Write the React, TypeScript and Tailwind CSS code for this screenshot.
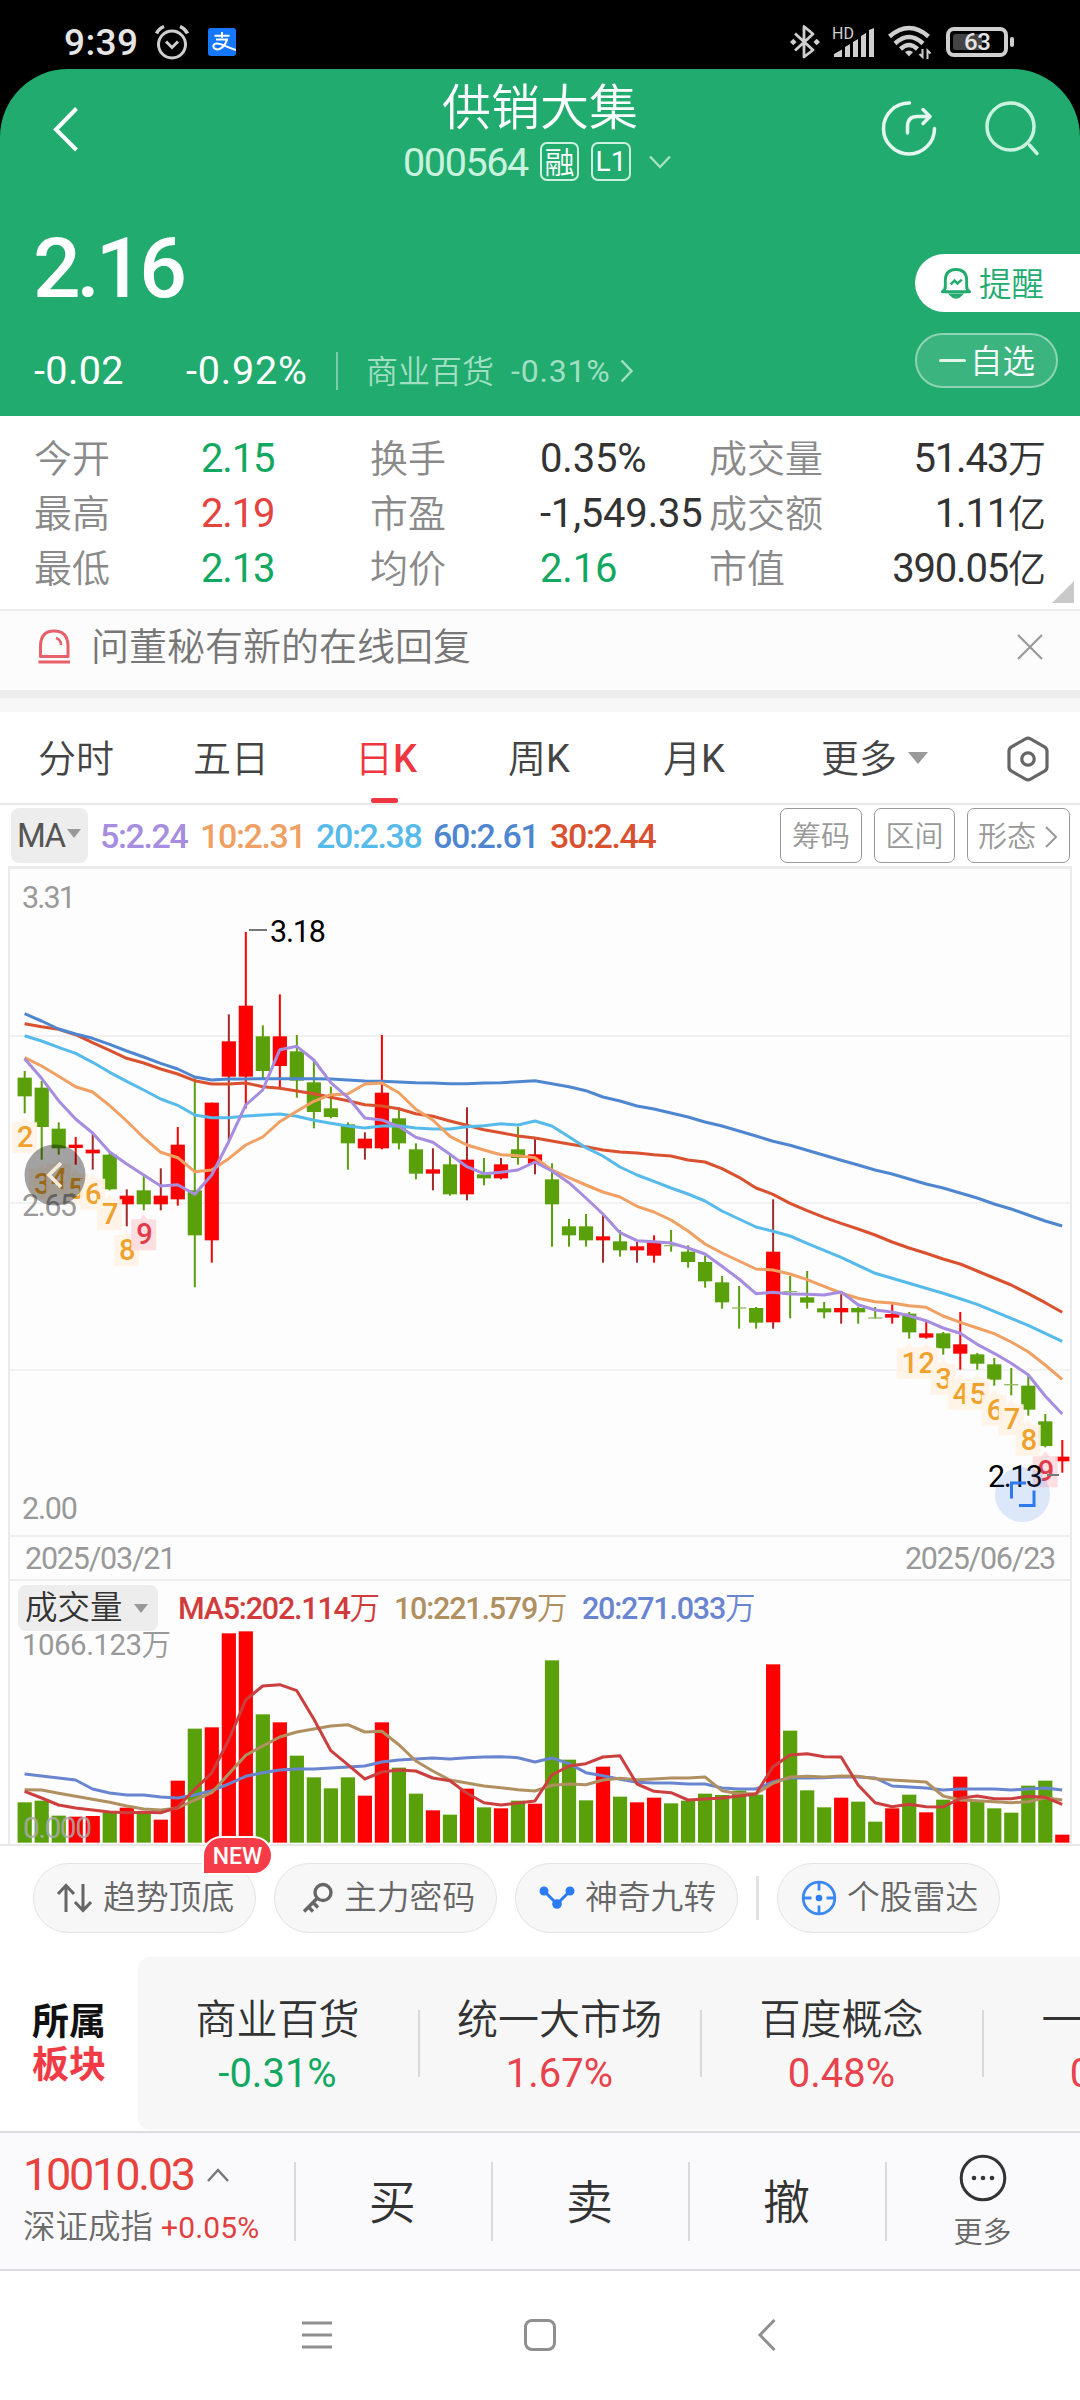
import React from "react";

const RED = "#ff0000";
const GREEN = "#5aa00a";
const DARK_WICK = "#a12a2a";

const STEP = 17.01;
const FIRST_X = 24.6;
const cx = (i: number) => FIRST_X + i * STEP;
// Chart values are stored in thirds of a pixel below each plot's origin.
const priceY = (v: number) => 860 + v / 3;
const volY = (v: number) => 1570 + v / 3;

// kind, high, low, body top, body bottom ("d" = rising candle with a dark wick)
type Candle = ["g" | "r" | "d", number, number, number, number];
const candles: Candle[] = [
  ["g", 633, 760, 653, 709], ["g", 663, 899, 683, 801], ["g", 787, 884, 806, 865],
  ["r", 831, 914, 854, 864], ["d", 820, 929, 869, 880], ["g", 878, 991, 884, 988],
  ["d", 988, 1099, 1007, 1033], ["g", 945, 1051, 991, 1033], ["d", 925, 1051, 1007, 1033],
  ["r", 801, 1037, 854, 1018], ["g", 655, 1282, 991, 1126], ["r", 728, 1208, 728, 1141],
  ["d", 463, 840, 544, 650], ["r", 216, 745, 437, 650], ["g", 496, 655, 529, 633],
  ["r", 403, 685, 529, 618], ["g", 525, 713, 574, 662], ["g", 600, 805, 667, 756],
  ["g", 680, 775, 745, 771], ["g", 787, 929, 793, 850], ["d", 817, 899, 836, 865],
  ["r", 525, 868, 698, 865], ["g", 742, 868, 775, 850], ["g", 850, 958, 868, 941],
  ["d", 865, 991, 928, 941], ["g", 884, 1007, 913, 1003], ["d", 742, 1021, 899, 1003],
  ["g", 894, 976, 943, 955], ["d", 894, 958, 913, 955], ["g", 800, 914, 868, 894],
  ["d", 835, 943, 883, 911], ["g", 910, 1160, 958, 1033], ["g", 1077, 1160, 1099, 1126],
  ["g", 1062, 1160, 1099, 1141], ["d", 1065, 1208, 1129, 1141], ["g", 1110, 1190, 1144, 1171],
  ["d", 1145, 1208, 1159, 1171], ["r", 1126, 1208, 1148, 1187], ["g", 1110, 1175, 1155, 1159],
  ["g", 1156, 1223, 1175, 1206], ["g", 1187, 1283, 1206, 1264], ["g", 1248, 1346, 1267, 1327],
  ["g", 1278, 1406, 1342, 1346], ["g", 1341, 1406, 1344, 1388], ["d", 1018, 1406, 1175, 1387],
  ["g", 1248, 1375, 1293, 1297], ["g", 1233, 1346, 1312, 1328], ["g", 1326, 1375, 1345, 1357],
  ["d", 1297, 1391, 1344, 1357], ["g", 1340, 1391, 1344, 1357], ["g", 1341, 1375, 1372, 1376],
  ["r", 1333, 1391, 1362, 1373], ["g", 1356, 1436, 1361, 1417], ["r", 1385, 1436, 1420, 1433],
  ["g", 1416, 1484, 1420, 1465], ["r", 1356, 1529, 1453, 1481], ["g", 1479, 1529, 1483, 1511],
  ["g", 1494, 1577, 1513, 1559], ["g", 1524, 1606, 1572, 1576], ["g", 1548, 1667, 1577, 1649],
  ["g", 1662, 1762, 1684, 1758], ["r", 1740, 1838, 1790, 1804],
];

const priceLines: [string, number[]][] = [
  ["#d9512f", [491, 500, 508, 524, 548, 571, 595, 609, 627, 642, 662, 672, 672, 669, 680, 685, 693, 701, 712, 722, 734, 738, 746, 761, 769, 783, 796, 809, 818, 828, 834, 843, 852, 860, 870, 876, 879, 884, 888, 900, 906, 926, 952, 984, 1003, 1030, 1052, 1072, 1090, 1107, 1125, 1146, 1164, 1180, 1197, 1212, 1233, 1254, 1275, 1301, 1328, 1357]],
  ["#4f86d0", [461, 483, 507, 522, 535, 553, 573, 591, 610, 627, 651, 660, 657, 657, 656, 656, 656, 656, 657, 660, 663, 664, 666, 668, 669, 671, 671, 669, 668, 665, 662, 671, 680, 692, 711, 723, 738, 747, 759, 771, 786, 798, 813, 828, 844, 856, 871, 886, 901, 915, 930, 942, 957, 972, 984, 999, 1014, 1032, 1047, 1065, 1083, 1098]],
  ["#56bbea", [527, 543, 562, 580, 607, 637, 664, 690, 717, 736, 765, 773, 773, 768, 765, 762, 769, 781, 790, 798, 804, 798, 797, 804, 807, 807, 800, 797, 791, 795, 783, 798, 830, 863, 888, 921, 945, 964, 984, 1002, 1023, 1053, 1077, 1101, 1114, 1128, 1150, 1171, 1192, 1216, 1240, 1255, 1270, 1285, 1300, 1316, 1333, 1354, 1375, 1396, 1420, 1444]],
  ["#f0a062", [593, 618, 649, 680, 696, 737, 783, 833, 877, 893, 935, 930, 896, 855, 831, 785, 754, 724, 704, 702, 672, 669, 698, 748, 780, 829, 855, 870, 884, 887, 893, 930, 953, 975, 996, 1011, 1039, 1056, 1080, 1113, 1152, 1179, 1203, 1227, 1230, 1242, 1259, 1279, 1299, 1315, 1325, 1329, 1337, 1342, 1368, 1387, 1404, 1421, 1446, 1475, 1515, 1558]],
  ["#a78de0", [596, 655, 722, 777, 819, 876, 912, 945, 978, 974, 1003, 945, 845, 735, 690, 569, 559, 600, 668, 712, 774, 780, 799, 832, 847, 883, 920, 941, 937, 930, 906, 933, 968, 1014, 1062, 1118, 1142, 1145, 1149, 1164, 1182, 1219, 1257, 1301, 1297, 1302, 1303, 1305, 1296, 1334, 1350, 1356, 1367, 1382, 1404, 1420, 1453, 1480, 1510, 1544, 1608, 1662]],
];

const volumes = [697, 692, 737, 740, 738, 727, 713, 727, 749, 632, 476, 472, 190, 184, 433, 457, 557, 622, 655, 622, 677, 457, 593, 671, 721, 734, 656, 712, 715, 692, 701, 271, 569, 691, 590, 680, 697, 683, 700, 692, 671, 675, 662, 674, 283, 482, 661, 712, 683, 695, 755, 715, 674, 727, 689, 620, 695, 715, 728, 647, 632, 794];

const volumeLines: [string, number[]][] = [
  ["#6a85d0", [612, 618, 624, 630, 657, 669, 675, 675, 681, 684, 675, 662, 642, 619, 608, 600, 597, 597, 594, 591, 588, 576, 570, 567, 564, 567, 563, 561, 560, 563, 576, 564, 581, 608, 617, 628, 637, 639, 639, 642, 642, 654, 657, 657, 636, 623, 624, 623, 620, 621, 624, 648, 651, 654, 660, 657, 657, 657, 660, 657, 654, 660]],
  ["#b09060", [659, 660, 670, 679, 688, 697, 708, 717, 720, 714, 690, 668, 612, 556, 528, 501, 486, 477, 468, 464, 486, 484, 524, 573, 603, 630, 639, 648, 653, 659, 663, 646, 642, 644, 630, 625, 629, 627, 624, 624, 621, 662, 671, 671, 640, 621, 619, 621, 618, 619, 626, 630, 633, 636, 678, 690, 692, 695, 698, 695, 683, 690]],
  ["#cc3f3f", [664, 684, 705, 714, 720, 726, 728, 727, 728, 712, 658, 609, 510, 390, 348, 344, 362, 447, 542, 584, 627, 606, 600, 603, 624, 632, 670, 698, 705, 699, 693, 615, 588, 581, 561, 557, 642, 664, 668, 690, 687, 684, 678, 672, 590, 555, 551, 560, 561, 645, 698, 710, 703, 710, 711, 685, 678, 686, 686, 679, 682, 703]],
];

// Candle index and count shown by each nine-turn marker
const markers: [number, number][] = [
  [0, 2], [1, 3], [2, 4], [3, 5], [4, 6], [5, 7], [6, 8], [7, 9],
  [52, 1], [53, 2], [54, 3], [55, 4], [56, 5], [57, 6], [58, 7], [59, 8], [60, 9],
];

const points = (vals: number[], y: (v: number) => number) =>
  vals.map((v, i) => `${cx(i).toFixed(1)},${y(v).toFixed(1)}`).join(" ");

function PriceChart() {
  return (
    <svg viewBox="10 869 1060 666" className="block h-[666px] w-[1060px] font-[Roboto] font-normal">
      {[1036, 1203, 1370].map((y) => (
        <line key={y} x1="10" x2="1070" y1={y} y2={y} stroke="#f2f2f2" strokeWidth="2" />
      ))}
      {candles.map(([k, hi, lo, top, bot], i) => {
        const body = k === "g" ? GREEN : RED;
        const wick = k === "d" ? DARK_WICK : body;
        const thin = k === "g" && bot - top <= 4;
        return (
          <g key={i}>
            <rect x={cx(i) - 0.9} y={priceY(hi)} width="2" height={(lo - hi) / 3} fill={wick} />
            <rect x={cx(i) - 7} y={priceY(top)} width="14.2" height={(bot - top) / 3} fill={thin ? "#92bb66" : body} />
          </g>
        );
      })}
      {priceLines.map(([c, v]) => (
        <polyline key={c} points={points(v, priceY)} fill="none" stroke={c} strokeWidth="3" strokeLinejoin="round" />
      ))}
      <line x1="249" x2="267" y1="930" y2="930" stroke="#777" strokeWidth="2" />
      <text x="270" y="942" fontSize="30.5" textLength="56" fill="#000">3.18</text>
      {markers.map(([i, n]) => {
        const x = cx(i);
        const y = priceY(candles[i][2]);
        const last = n === 9;
        return (
          <g key={i}>
            <path
              d={`M${x - 12.5} ${y + 9} h8.5 l4 -5 l4 5 h8.5 v31 h-25z`}
              fill={last ? "#fddcdf" : "#fff3e5"}
              fillOpacity="0.93"
            />
            <text x={x + 0.7} y={y + 34} fontSize="29" textAnchor="middle" fill={last ? "#e23c4a" : "#f0a12c"} className="font-medium">
              {n}
            </text>
          </g>
        );
      })}
      <g fill="#999" fontSize="30.5">
        <text x="22" y="907.5" textLength="54">3.31</text>
        <text x="22" y="1216" textLength="55">2.65</text>
        <text x="22" y="1519" textLength="56">2.00</text>
      </g>
      <line x1="1047" x2="1059" y1="1475" y2="1475" stroke="#777" strokeWidth="2" />
      <text x="988" y="1487" fontSize="30.5" textLength="55" fill="#000">2.13</text>
      <circle cx="55" cy="1175" r="30.5" fill="#000" fillOpacity="0.36" />
      <path d="M61 1163 L49 1175 L61 1187" fill="none" stroke="#f3ead9" strokeWidth="3.8" />
      <circle cx="1022.5" cy="1494.5" r="27.5" fill="#2f74ee" fillOpacity="0.16" />
      <path d="M1026 1483 H1011.5 V1498.5 M1034 1490.5 V1505.5 H1019" fill="none" stroke="#2f78ee" strokeWidth="3" />
    </svg>
  );
}

function VolumeChart() {
  return (
    <svg viewBox="10 1630 1060 214" className="block h-[214px] w-[1060px] font-[Roboto,'Noto_Sans_CJK_SC',sans-serif] font-normal">
      {volumes.map((v, i) => (
        <rect key={i} x={cx(i) - 7} y={volY(v)} width="14.2" height={(818 - v) / 3} fill={candles[i][0] === "g" ? GREEN : RED} />
      ))}
      {volumeLines.map(([c, v]) => (
        <polyline key={c} points={points(v, volY)} fill="none" stroke={c} strokeWidth="3" strokeLinejoin="round" />
      ))}
      <text x="22" y="1655" fontSize="29.5" textLength="149" fill="#999">
        1066.123<tspan className="font-[350]">万</tspan>
      </text>
      <text x="23" y="1838" fontSize="30" textLength="69" fill="#aaa" fillOpacity="0.85">0.000</text>
    </svg>
  );
}

function StatusBar() {
  return (
    <div className="flex h-[69px] items-center bg-black pt-[15px] pl-[64px]">
      <div className="w-[91px] text-[37px] leading-none font-medium tracking-[0.01em] text-[#e5e5e5]">9:39</div>
      <svg viewBox="0 0 34 36" className="-mt-[1px] h-[36px] w-[34px]" fill="none" stroke="#cfcfcf" strokeWidth="3">
        <circle cx="17" cy="20.5" r="13.5" />
        <path d="M11 17.500 l6 6 l6 -6" />
        <path d="M1.500 9.500 Q4 4.500 9 2.500 M32.500 9.500 Q30 4.500 25 2.500" strokeWidth="3.5" />
      </svg>
      <svg viewBox="0 0 28 28" className="ml-[19px] h-[28px] w-[28px]">
        <rect width="28" height="28" rx="3" fill="#1677ff" />
        <path d="M14 4 V10 M6.500 7.800 H21.500 M8 11.500 H20 M19 11.500 C17 19 11 22.500 7.500 21 C4 19.500 5 15.500 9 15.500 C14 15.500 18 19 28 22" fill="none" stroke="#fff" strokeWidth="2" />
      </svg>
      <svg viewBox="0 0 30 36" className="ml-[554px] h-[36px] w-[30px]" fill="none" stroke="#cfcfcf" strokeWidth="2.8">
        <path d="M5 9.500 L23 26 L14 33 V2.500 L23 10 L5 26.500" strokeLinejoin="round" />
        <path d="M0 18 l3.300 -3.300 l3.300 3.300 l-3.300 3.300z M23.400 18 l3.300 -3.300 l3.300 3.300 l-3.300 3.300z" fill="#cfcfcf" stroke="none" />
      </svg>
      <svg viewBox="0 0 42 32" className="ml-[12px] h-[32px] w-[42px] overflow-visible" fill="#cfcfcf">
        <path d="M2 31 V28 L10 23.500 V31z M13 31 V21 L18 18 V31z M21 31 V16 L26 13 V31z M29 31 V10 L34 7 V31z M37 31 V4 L42 2 V31z" />
        <text x="0" y="12.500" fontSize="16" className="font-[Roboto] font-normal">HD</text>
      </svg>
      <svg viewBox="0 0 44 34" className="ml-[14px] h-[34px] w-[44px]" fill="none" stroke="#cfcfcf" strokeWidth="4.5">
        <path d="M1.500 11.500 Q21 -5.500 40.500 11.500" />
        <path d="M7 18.500 Q21 5.500 35 18.500" />
        <path d="M12.500 24 Q21 16 29.500 24" />
        <path d="M21 31.500 l-4 -4.500 q4 -3 8 0z" fill="#cfcfcf" stroke="none" />
        <path d="M34.500 24 V32 l-3 -3 M39.500 34 V25.500 l3 3" strokeWidth="2" />
      </svg>
      <div className="ml-[14px] flex h-[30px] w-[62px] items-center rounded-[8px] border-[4px] border-[#cfcfcf] p-[3px]">
        <div className="flex h-full w-[29px] items-center rounded-[3px] bg-[#444] pl-[11px] text-[24px] leading-none font-medium tracking-[-0.02em] text-[#e5e5e5]">63</div>
      </div>
      <div className="ml-[2px] h-[10px] w-[4px] rounded-[2px] bg-[#cfcfcf]" />
    </div>
  );
}

function Header() {
  return (
    <header className="h-[347px] rounded-t-[68px] bg-[#22ab6f] text-white">
      <div className="flex h-[124px]">
        <div className="w-[360px] pt-[37px] pl-[50px]">
          <svg viewBox="0 0 30 46" className="h-[46px] w-[30px]" fill="none" stroke="#fff" strokeWidth="4">
            <path d="M26.500 2.500 L6 23.500 L26.500 44" />
          </svg>
        </div>
        <div className="w-[360px] pt-[15px]">
          <div className="text-center text-[49px] leading-none">供销大集</div>
          <div className="mt-[9px] flex h-[39px] items-center pl-[43px]">
            <span className="w-[137px] pt-[3px] text-[39.500px] leading-none font-normal tracking-[-0.035em] text-[#c9f3df]">000564</span>
            <span className="flex h-[39px] w-[39px] items-center justify-center rounded-[7px] border-2 border-[#c9f3df] pt-[2px] text-[30px] leading-none">融</span>
            <span className="ml-[12px] flex h-[39px] w-[40px] items-center justify-center rounded-[7px] border-2 border-[#c9f3df] text-[28px] leading-none font-normal">L1</span>
            <svg viewBox="0 0 22 14" className="ml-[18px] h-[14px] w-[22px]" fill="none" stroke="#a4e0c3" strokeWidth="2.5">
              <path d="M1 1.500 L11 12 L21 1.500" />
            </svg>
          </div>
        </div>
        <div className="flex gap-[48px] pt-[31px] pl-[161px]">
          <svg viewBox="0 0 56 56" className="h-[56px] w-[56px]" fill="none" stroke="#e6f7ef" strokeWidth="3.5" strokeLinecap="round">
            <path d="M28.500 3 A25.500 25.500 0 1 0 53.500 28.500" />
            <path d="M26.500 33 V26 Q27 16.500 36 16.500 H48 M42 9.500 L49 16.500 L42 23.500" strokeLinejoin="round" />
          </svg>
          <svg viewBox="0 0 56 56" className="h-[56px] w-[56px]" fill="none" stroke="#c9f3df" strokeWidth="3.5" strokeLinecap="round">
            <circle cx="25.500" cy="26.500" r="23.500" />
            <path d="M44.500 45 L52 53.500" />
          </svg>
        </div>
      </div>
      <div className="flex h-[90px] items-start justify-between">
        <div className="pt-[34px] pl-[33px] text-[84px] leading-none font-medium tracking-[-0.05em]">2.16</div>
        <div className="mt-[61px] flex h-[58px] w-[165px] items-center rounded-l-full bg-white pl-[25px] text-[#22ab6f]">
          <svg viewBox="0 0 32 34" className="h-[33px] w-[32px]" fill="none" stroke="#22ab6f" strokeWidth="3">
            <path d="M2 25.500 Q5 23.500 5 20 V13 Q5.500 2.500 16 2.500 Q26.500 2.500 27 13 V20 Q27 23.500 30 25.500z" strokeLinejoin="round" />
            <path d="M10.500 18 l4 -4 l3 3 l4.500 -4" strokeWidth="2.5" />
            <path d="M10.500 28.500 Q16 34.500 21.500 28.500z" strokeWidth="2.5" />
          </svg>
          <span className="ml-[7px] pt-[4px] text-[32.500px] leading-none">提醒</span>
        </div>
      </div>
      <div className="mt-[51px] flex h-[54px] items-end">
        <div className="flex h-[38px] w-[881px] items-center pt-[3px] text-[39.500px] leading-none">
          <span className="w-[152px] pl-[34px] font-normal tracking-[0.01em]">-0.02</span>
          <span className="w-[151px] pl-[34px] font-normal tracking-[0.02em] whitespace-nowrap">-0.92%</span>
          <span className="ml-[33px] h-[38px] w-[2px] shrink-0 bg-[#7accaa]" />
          <span className="ml-[28px] pt-[2px] text-[32px] leading-none text-[#a0dfc2]">商业百货</span>
          <span className="ml-[17px] w-[103px] text-[32px] leading-none font-normal tracking-[0.025em] whitespace-nowrap text-[#a0dfc2]">-0.31%</span>
          <svg viewBox="0 0 14 24" className="ml-[6px] h-[24px] w-[14px]" fill="none" stroke="#a0dfc2" strokeWidth="2.5">
            <path d="M1.500 1.500 L11.500 12 L1.500 22.500" />
          </svg>
        </div>
        <div className="ml-[34px] flex h-[55px] w-[143px] items-center rounded-full border-2 border-[#8ed4b4] bg-[#3bb47f] pl-[22px]">
          <span className="h-[3px] w-[27px] rounded bg-[#dff5ea]" />
          <span className="ml-[4px] pt-[4px] text-[32.500px] leading-none">自选</span>
        </div>
      </div>
    </header>
  );
}

const quotes: [string, string, string, string, string, string, string, string][] = [
  ["今开", "2.15", "text-[#12a861]", "换手", "0.35%", "text-[#333]", "成交量", "51.43万"],
  ["最高", "2.19", "text-[#e5443e]", "市盈", "-1,549.35", "text-[#333]", "成交额", "1.11亿"],
  ["最低", "2.13", "text-[#12a861]", "均价", "2.16", "text-[#12a861]", "市值", "390.05亿"],
];

function Quotes() {
  return (
    <section className="relative h-[195px] border-b-2 border-[#ebebeb] pt-[15px] text-[38px] leading-none text-[#8a8a8a]">
      {quotes.map(([a, b, bc, c, d, dc, e, f]) => (
        <div key={a} className="flex h-[55px] items-center pl-[34px]">
          <span className="w-[167px]">{a}</span>
          <span className={`w-[169px] text-[40px] font-normal tracking-[-0.03em] ${bc}`}>{b}</span>
          <span className="w-[170px]">{c}</span>
          <span className={`w-[169px] text-[40px] font-normal tracking-[-0.005em] whitespace-nowrap ${dc}`}>{d}</span>
          <span className="w-[124px] whitespace-nowrap">{e}</span>
          <span className="w-[213px] text-right text-[40px] font-normal tracking-[-0.03em] whitespace-nowrap text-[#333]">
            {f.slice(0, -1)}
            <span className="text-[38px] font-[350] tracking-normal">{f.slice(-1)}</span>
          </span>
        </div>
      ))}
      <div className="absolute right-[6px] bottom-[6px] h-[22px] w-[22px] bg-[#c9c9c9] [clip-path:polygon(100%_0,100%_100%,0_100%)]" />
    </section>
  );
}

function Notice() {
  return (
    <>
      <section className="flex h-[79px] items-center bg-[#fcfcfc] pb-[7px] pl-[37px]">
        <svg viewBox="0 0 34 36" className="h-[36px] w-[34px]" fill="none" stroke="#e8606a" strokeWidth="3">
          <path d="M3.500 27.500 V16.500 Q4 2 17 2 Q30.500 2 31 16.500 V27.500z" strokeLinejoin="round" />
          <path d="M19 9 Q24 10.500 24 16" strokeWidth="2.5" />
          <path d="M1.500 33 H33" />
        </svg>
        <span className="ml-[20px] w-[926px] text-[38px] leading-none text-[#777]">问董秘有新的在线回复</span>
        <svg viewBox="0 0 26 26" className="h-[26px] w-[26px]" fill="none" stroke="#999" strokeWidth="2.2">
          <path d="M1 1 L25 25 M25 1 L1 25" />
        </svg>
      </section>
      <div className="h-[8px] bg-[#ededed]" />
      <div className="h-[14px] bg-[#f7f7f7]" />
    </>
  );
}

function Tabs() {
  return (
    <nav className="flex h-[93px] items-center border-b-2 border-[#e9e9e9] pt-[2px] pl-[38px] text-[38px] leading-none text-[#444]">
      <span className="w-[155px]">分时</span>
      <span className="w-[162px]">五日</span>
      <span className="relative w-[153px] text-[#ee3741]">
        日<b className="font-medium">K</b>
        <i className="absolute top-[58px] left-[16px] h-[5px] w-[27px] rounded-[2px] bg-[#ee3741]" />
      </span>
      <span className="w-[155px]">
        周<b className="font-normal">K</b>
      </span>
      <span className="w-[158px]">
        月<b className="font-normal">K</b>
      </span>
      <span className="w-[87px]">更多</span>
      <i className="-mt-px h-[12px] w-[20px] bg-[#999] [clip-path:polygon(0_0,100%_0,50%_100%)]" />
      <svg viewBox="0 0 42 46" className="ml-[79px] h-[46px] w-[42px]" fill="none" stroke="#666" strokeWidth="3.2">
        <path d="M18.500 2.800 Q21 1.500 23.500 2.800 L37.500 10.800 Q40 12.300 40 15 V31 Q40 33.700 37.500 35.200 L23.500 43.200 Q21 44.500 18.500 43.200 L4.500 35.200 Q2 33.700 2 31 V15 Q2 12.300 4.500 10.800z" />
        <circle cx="21" cy="23" r="6.2" />
      </svg>
    </nav>
  );
}

function Averages() {
  return (
    <div className="flex h-[61px] items-start pt-[3px] pl-[11px] text-[34px] leading-none font-normal">
      <div className="flex h-[55px] w-[77px] items-center rounded-[8px] bg-[#ededed] pl-[6px] text-[#555]">
        <span className="w-[50px] text-[33px] tracking-[-0.05em]">MA</span>
        <i className="-mt-1 h-[9px] w-[14px] bg-[#999] [clip-path:polygon(0_0,100%_0,50%_100%)]" />
      </div>
      <div className="flex h-[55px] w-[692px] items-center pl-[12px] font-medium tracking-[-0.04em] whitespace-nowrap">
        <span className="w-[100px] text-[#a78de0]">5:2.24</span>
        <span className="w-[116px] text-[#f0a062]">10:2.31</span>
        <span className="w-[117px] text-[#56bbea]">20:2.38</span>
        <span className="w-[117px] text-[#4f86d0]">60:2.61</span>
        <span className="text-[#d9512f]">30:2.44</span>
      </div>
      <div className="flex gap-[12px] text-[29px] leading-none font-[350] text-[#999]">
        <div className="flex h-[55px] w-[82px] items-center justify-center rounded-[7px] border-[1.500px] border-[#999] pt-[3px]">筹码</div>
        <div className="flex h-[55px] w-[81px] items-center justify-center rounded-[7px] border-[1.500px] border-[#999] pt-[3px]">区间</div>
        <div className="flex h-[55px] w-[103px] items-center gap-[9px] rounded-[7px] border-[1.500px] border-[#999] pt-[3px] pl-[10px]">
          形态
          <svg viewBox="0 0 12 22" className="h-[22px] w-[12px]" fill="none" stroke="#999" strokeWidth="2">
            <path d="M1 1 L11 11 L1 21" />
          </svg>
        </div>
      </div>
    </div>
  );
}

const Wan = () => <span className="font-[350]">万</span>;

function Charts() {
  return (
    <section className="ml-[8px] w-[1064px] border-x-2 border-t-3 border-[#ebebeb] bg-[#fdfdfd]">
      <PriceChart />
      <div className="flex h-[46px] items-center justify-between border-y-2 border-[#efefef] pt-[2px] pr-[15px] pl-[15px] text-[30.500px] leading-none font-normal tracking-[-0.04em] text-[#999]">
        <span>2025/03/21</span>
        <span>2025/06/23</span>
      </div>
      <div className="flex h-[49px] items-start pl-[8px]">
        <div className="mt-[4px] flex h-[46px] w-[140px] shrink-0 items-center rounded-[8px] bg-[#ededed] pt-px pl-[7px]">
          <span className="w-[109px] text-[32.500px] leading-none text-[#333]">成交量</span>
          <i className="h-[9px] w-[14px] bg-[#999] [clip-path:polygon(0_0,100%_0,50%_100%)]" />
        </div>
        <div className="flex pt-[13px] pl-[20px] text-[30.500px] leading-none font-medium tracking-[-0.04em] whitespace-nowrap">
          <span className="w-[216px] text-[#d13b3b]">MA5:202.114<Wan /></span>
          <span className="w-[188px] text-[#b09060]">10:221.579<Wan /></span>
          <span className="text-[#6a85d0]">20:271.033<Wan /></span>
        </div>
      </div>
      <VolumeChart />
    </section>
  );
}

function Tool({ label, children }: { label: string; children: React.ReactNode }) {
  return (
    <div className="flex h-[70px] w-[223px] items-center rounded-full border-[1.500px] border-[#e4e4e4] bg-[#f7f7f7] pl-[22px] text-[#666]">
      <div className="flex w-[47px] items-center">{children}</div>
      <span className="text-[32.800px] leading-none">{label}</span>
    </div>
  );
}

function Tools() {
  return (
    <section className="relative flex h-[113px] items-start border-t-2 border-[#e8e8e8] pt-[17px] pl-[33px]">
      <Tool label="趋势顶底">
        <svg viewBox="0 0 36 30" className="h-[30px] w-[36px]" fill="none" stroke="#666" strokeWidth="3">
          <path d="M10 29 V3 M2 11 L10 2.500 L18 11 M27 1 V27 M19 19 L27 27.500 L35 19" />
        </svg>
      </Tool>
      <div className="ml-[18px]">
        <Tool label="主力密码">
          <svg viewBox="0 0 32 32" className="ml-[5px] h-[32px] w-[32px]" fill="none" stroke="#666" strokeWidth="3.4">
            <circle cx="21" cy="10.500" r="8" />
            <path d="M15 16.500 L2 29.500 M6.500 25 L11 29.500 M11 20.500 L16 25.500" />
          </svg>
        </Tool>
      </div>
      <div className="ml-[18px]">
        <Tool label="神奇九转">
          <svg viewBox="0 0 36 26" className="ml-[1px] h-[26px] w-[36px]" fill="#2c7bf6">
            <path d="M5 6 L18 19 L31 6" fill="none" stroke="#2c7bf6" strokeWidth="3" />
            <circle cx="5" cy="6" r="4.5" />
            <circle cx="18" cy="19" r="4.8" />
            <circle cx="31" cy="6" r="4.5" />
          </svg>
        </Tool>
      </div>
      <div className="mt-[13px] ml-[18px] h-[44px] w-[3px] bg-[#e2e2e2]" />
      <div className="ml-[18px]">
        <Tool label="个股雷达">
          <svg viewBox="0 0 36 36" className="ml-[1px] h-[36px] w-[36px]" fill="none" stroke="#3c88f0" strokeWidth="2.8">
            <circle cx="18" cy="18" r="15.8" />
            <path d="M18 2 V10.500 M18 25.500 V34 M2 18 H10.500 M25.500 18 H34" />
            <circle cx="18" cy="18" r="3.3" fill="#2c7bf6" stroke="none" />
          </svg>
        </Tool>
      </div>
      <div className="absolute -top-[10px] left-[202px] flex h-[39px] w-[71px] items-center justify-center rounded-t-full rounded-br-full rounded-bl-[4px] border-2 border-white bg-[#f63c48] pt-px text-[23px] leading-none font-medium text-white">
        NEW
      </div>
    </section>
  );
}

const sectors: [string, string, string][] = [
  ["商业百货", "-0.31%", "text-[#12a861]"],
  ["统一大市场", "1.67%", "text-[#e8424c]"],
  ["百度概念", "0.48%", "text-[#e8424c]"],
  ["一带一路", "0.28%", "text-[#e8424c]"],
];

function Sectors() {
  return (
    <section className="flex h-[174px] overflow-hidden">
      <div className="flex w-[138px] shrink-0 flex-col pt-[45px] pl-[32px] text-[37px] leading-[42.500px] font-bold">
        <span className="text-[#111]">所属</span>
        <span className="text-[#f03a45]">板块</span>
      </div>
      <div className="flex h-[173px] shrink-0 items-start rounded-l-[12px] bg-[#f7f7f7] pt-[34px] leading-none">
        {sectors.map(([name, pct, tone]) => (
          <div key={name} className="relative flex w-[282px] shrink-0 flex-col items-center pr-[3px]">
            <span className="pt-[9px] text-[41px] text-[#333]">{name}</span>
            <span className={`mt-[13px] text-[40px] font-normal ${tone}`}>{pct}</span>
            <i className="absolute top-[19px] right-0 h-[67px] w-[2px] bg-[#d9d9d9]" />
          </div>
        ))}
      </div>
    </section>
  );
}

function TradeBar() {
  return (
    <section className="flex h-[140px] border-y-2 border-[#dcdce0] bg-[#fafafc] leading-none">
      <div className="w-[294px] pt-[19px] pl-[23px]">
        <div className="flex items-center">
          <span className="w-[184px] text-[45px] font-normal tracking-[-0.05em] text-[#e8423e]">10010.03</span>
          <svg viewBox="0 0 22 14" className="h-[14px] w-[22px]" fill="none" stroke="#777" strokeWidth="2.5">
            <path d="M1 13 L11 2 L21 13" />
          </svg>
        </div>
        <div className="mt-[14px] flex items-center whitespace-nowrap">
          <span className="w-[138px] text-[32.500px] text-[#6b6b6b]">深证成指</span>
          <span className="pt-[2px] text-[30px] font-normal tracking-[0.005em] text-[#e0403f]">+0.05%</span>
        </div>
      </div>
      {["买", "卖", "撤"].map((t) => (
        <div key={t} className="relative flex w-[197.300px] items-center justify-center pt-[3px] text-[47px] text-[#333]">
          <i className="absolute top-[29px] left-0 h-[79px] w-[2px] bg-[#dadadc]" />
          {t}
        </div>
      ))}
      <div className="relative flex w-[195px] flex-col items-center pt-[21px]">
        <i className="absolute top-[29px] left-0 h-[79px] w-[2px] bg-[#dadadc]" />
        <svg viewBox="0 0 48 48" className="h-[48px] w-[48px]" fill="#333">
          <circle cx="24" cy="24" r="21.8" fill="none" stroke="#333" strokeWidth="3" />
          <circle cx="15" cy="24" r="2.3" />
          <circle cx="24" cy="24" r="2.3" />
          <circle cx="33" cy="24" r="2.3" />
        </svg>
        <span className="mt-[17px] text-[29px] text-[#666]">更多</span>
      </div>
    </section>
  );
}

function SystemNav() {
  return (
    <footer className="flex h-[129px] items-center pb-px pl-[302px]">
      <svg viewBox="0 0 30 32" className="h-[32px] w-[30px]" fill="none" stroke="#8f8f8f" strokeWidth="3">
        <path d="M0 4 H30 M0 16 H30 M0 28 H30" />
      </svg>
      <div className="ml-[192px] h-[32px] w-[32px] rounded-[8px] border-[3px] border-[#8f8f8f]" />
      <svg viewBox="0 0 20 32" className="ml-[201px] h-[32px] w-[20px]" fill="none" stroke="#8f8f8f" strokeWidth="3">
        <path d="M17.500 1 L3 16 L17.500 31" />
      </svg>
    </footer>
  );
}

export default function App() {
  return (
    <main className="h-[2400px] w-[1080px] overflow-hidden bg-white font-[Roboto,'Noto_Sans_CJK_SC',sans-serif] font-[350]">
      <div className="bg-black">
        <StatusBar />
        <Header />
      </div>
      <Quotes />
      <Notice />
      <Tabs />
      <Averages />
      <Charts />
      <Tools />
      <Sectors />
      <TradeBar />
      <SystemNav />
    </main>
  );
}
